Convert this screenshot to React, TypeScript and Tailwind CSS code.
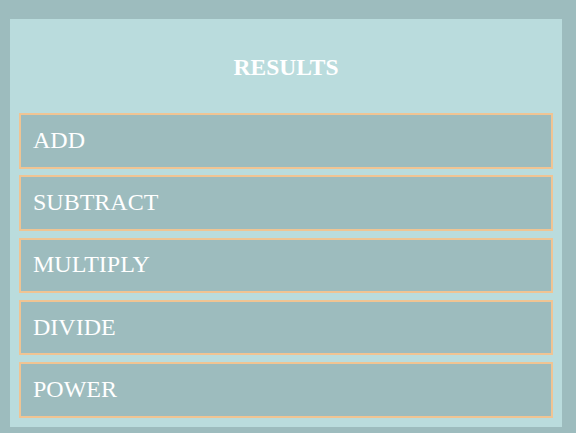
const ops = ["ADD", "SUBTRACT", "MULTIPLY", "DIVIDE", "POWER"];

export default function App() {
  return (
    <div
      className="min-h-screen w-full bg-[#9dbcbe] pt-[19px] pl-[10px]"
      style={{ fontFamily: '"Liberation Serif", "Times New Roman", serif' }}
    >
      <div className="w-[552px] bg-[#badcdd] p-[9px]">
        <div className="mb-[6px] flex h-[79px] items-center justify-center">
          <h2 className="text-[23.5px] font-bold text-white">RESULTS</h2>
        </div>
        <ul className="flex flex-col gap-[6.75px]">
          {ops.map((op) => (
            <li
              key={op}
              className="flex h-[55.5px] items-center border-2 border-[#f0c493] bg-[#9dbcbe] px-3 pb-[2px] text-[24px] text-white"
            >
              {op}
            </li>
          ))}
        </ul>
      </div>
    </div>
  );
}
